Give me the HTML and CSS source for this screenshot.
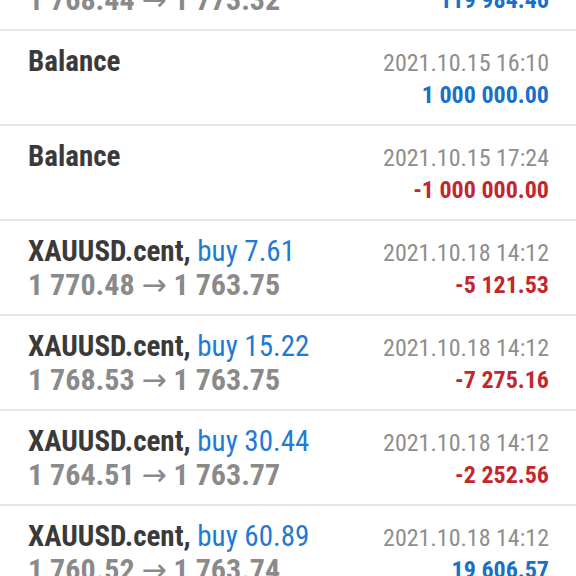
FILE: index.html
```html
<!DOCTYPE html>
<html lang="en">
<head>
    <meta charset="UTF-8">
    <meta name="viewport" content="width=device-width, initial-scale=1.0">
    <title>History</title>
    <link rel="stylesheet" href="styles.css">
</head>
<body>
    <div class="history">
        <div class="deal">
            <div class="left">
                <div class="title">XAUUSD.cent, <span class="type">buy 30.44</span></div>
                <div class="prices">1 768.44 <span class="arrow">→</span> 1 773.32</div>
            </div>
            <div class="right">
                <div class="time">2021.10.15 16:02</div>
                <div class="profit plus">119 984.46</div>
            </div>
        </div>
        <div class="deal">
            <div class="left">
                <div class="title">Balance</div>
            </div>
            <div class="right">
                <div class="time">2021.10.15 16:10</div>
                <div class="profit plus">1 000 000.00</div>
            </div>
        </div>
        <div class="deal">
            <div class="left">
                <div class="title">Balance</div>
            </div>
            <div class="right">
                <div class="time">2021.10.15 17:24</div>
                <div class="profit minus">-1 000 000.00</div>
            </div>
        </div>
        <div class="deal">
            <div class="left">
                <div class="title">XAUUSD.cent, <span class="type">buy 7.61</span></div>
                <div class="prices">1 770.48 <span class="arrow">→</span> 1 763.75</div>
            </div>
            <div class="right">
                <div class="time">2021.10.18 14:12</div>
                <div class="profit minus">-5 121.53</div>
            </div>
        </div>
        <div class="deal">
            <div class="left">
                <div class="title">XAUUSD.cent, <span class="type">buy 15.22</span></div>
                <div class="prices">1 768.53 <span class="arrow">→</span> 1 763.75</div>
            </div>
            <div class="right">
                <div class="time">2021.10.18 14:12</div>
                <div class="profit minus">-7 275.16</div>
            </div>
        </div>
        <div class="deal">
            <div class="left">
                <div class="title">XAUUSD.cent, <span class="type">buy 30.44</span></div>
                <div class="prices">1 764.51 <span class="arrow">→</span> 1 763.77</div>
            </div>
            <div class="right">
                <div class="time">2021.10.18 14:12</div>
                <div class="profit minus">-2 252.56</div>
            </div>
        </div>
        <div class="deal">
            <div class="left">
                <div class="title">XAUUSD.cent, <span class="type">buy 60.89</span></div>
                <div class="prices">1 760.52 <span class="arrow">→</span> 1 763.74</div>
            </div>
            <div class="right">
                <div class="time">2021.10.18 14:12</div>
                <div class="profit plus">19 606.57</div>
            </div>
        </div>
    </div>
</body>
</html>
```

FILE: styles.css
```css
body {
    margin: 0;
    background-color: #fff;
    font-family: "Roboto Condensed", Roboto, sans-serif;
    font-stretch: 75%;
    overflow: hidden;
}
.history {
    margin-top: -64px;
}
.deal {
    display: flex;
    justify-content: space-between;
    padding: 14px 27px 13px 28px;
    border-bottom: 2px solid #e6e6e6;
    line-height: 33px;
}
.title {
    font-size: 29px;
    font-weight: bold;
    color: #3a3a3a;
}
.type {
    font-weight: normal;
    color: #1f7ad3;
}
.prices {
    font-size: 30px;
    font-weight: bold;
    color: #8a8a8a;
}
.arrow {
    font-family: "DejaVu Sans", sans-serif;
    font-weight: normal;
    font-size: 30px;
    font-stretch: 100%;
    line-height: 0;
}
.right {
    text-align: right;
    padding-top: 2px;
}
.time {
    font-size: 24px;
    color: #8e8e8e;
}
.profit {
    font-size: 24px;
    font-weight: bold;
    line-height: 31px;
}
.plus {
    color: #1a6fc9;
}
.minus {
    color: #c4262e;
}
```
